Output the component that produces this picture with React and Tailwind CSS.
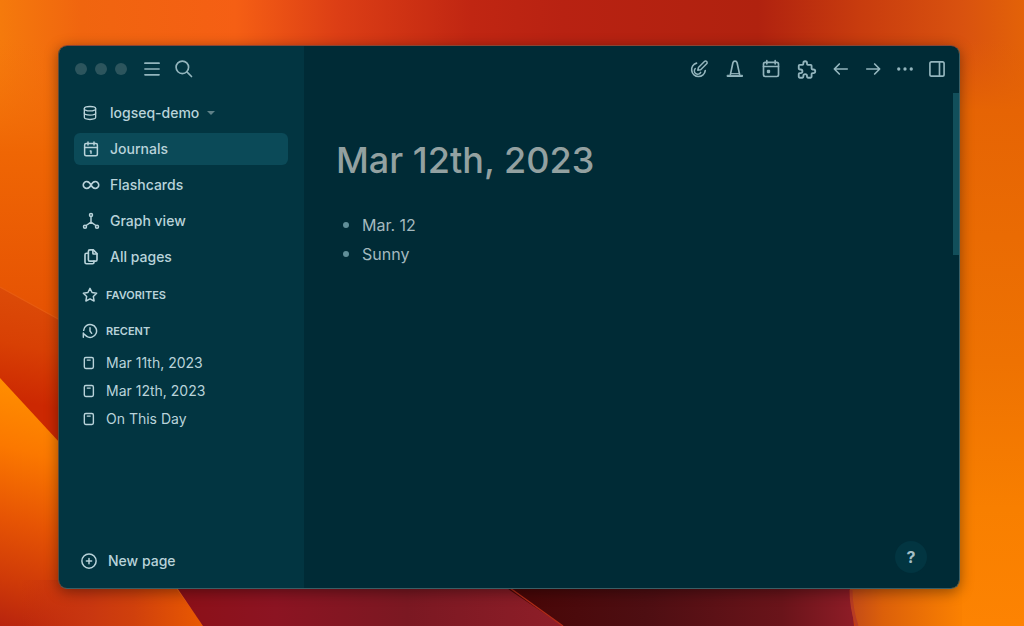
import React from "react";

function Icon({ size = 20, stroke = 2, children, className = "" }) {
  return (
    <svg
      width={size}
      height={size}
      viewBox="0 0 24 24"
      fill="none"
      stroke="currentColor"
      strokeWidth={stroke}
      strokeLinecap="round"
      strokeLinejoin="round"
      className={"shrink-0 " + className}
      aria-hidden="true"
    >
      {children}
    </svg>
  );
}

const DatabaseIcon = () => (
  <Icon size={16}>
    <ellipse cx="12" cy="5.500" rx="8.500" ry="3.200" />
    <path d="M3.500 5.500v6.500a8.500 3.200 0 0 0 17 0V5.500" />
    <path d="M3.500 12v6.500a8.500 3.200 0 0 0 17 0v-6.500" />
  </Icon>
);

const JournalIcon = () => (
  <Icon size={18}>
    <rect x="3.500" y="4.500" width="17" height="16.500" rx="2" />
    <path d="M16 2.500v4M8 2.500v4M3.500 10h17M11 14.500h1v3" />
  </Icon>
);

const InfinityIcon = () => (
  <Icon size={18} stroke={2.2}>
    <path d="M9.600 8.800a4.600 4.600 0 1 0 0 6.400c1 -1 1.700 -2 2.400 -3.200c0.700 -1.200 1.400 -2.200 2.400 -3.200a4.600 4.600 0 1 1 0 6.400c-1 -1 -1.700 -2 -2.400 -3.200c-0.700 -1.200 -1.400 -2.200 -2.400 -3.200" />
  </Icon>
);

const GraphIcon = () => (
  <Icon size={18}>
    <circle cx="12" cy="4" r="2" />
    <circle cx="4" cy="19.500" r="2" />
    <circle cx="20" cy="19.500" r="2" />
    <path d="M5.500 18L12 13.500l6.500 4.500M12 6v7.500" />
  </Icon>
);

const FilesIcon = () => (
  <Icon size={18} stroke={2.2}>
    <path d="M14.500 2.500v4.500a1 1 0 0 0 1 1h4.500" />
    <path d="M18 17.500h-7.500a2 2 0 0 1 -2 -2v-11a2 2 0 0 1 2 -2h4.500l5 5v8a2 2 0 0 1 -2 2z" />
    <path d="M16 17.500v1.500a2 2 0 0 1 -2 2h-8a2 2 0 0 1 -2 -2v-10a2 2 0 0 1 2 -2h2.500" />
  </Icon>
);

const StarIcon = () => (
  <Icon size={16} stroke={2.2}>
    <path d="M12 17.750l-6.172 3.245l1.179 -6.873l-5 -4.867l6.900 -1l3.086 -6.253l3.086 6.253l6.900 1l-5 4.867l1.179 6.873z" />
  </Icon>
);

const HistoryIcon = () => (
  <Icon size={16} stroke={2.2}>
    <path d="M12 7v5l2.500 3.500" />
    <path d="M2.500 11a9.700 9.700 0 1 1 4.500 9.200" />
    <path d="M2 15v6.500M2.200 16l5 4" />
  </Icon>
);

const PageIcon = () => (
  <Icon size={14} stroke={2.4}>
    <rect x="4" y="2.500" width="15.500" height="19" rx="2.500" />
    <path d="M9 7h5" />
  </Icon>
);

const PlusIcon = () => (
  <Icon size={18}>
    <circle cx="12" cy="12" r="9.500" />
    <path d="M8.500 12h7M12 8.500v7" />
  </Icon>
);

const toolbar = [
  {
    label: "Edit",
    wide: true,
    icon: (
      <Icon>
        <path d="M9 5a8.200 8.200 0 1 0 10.500 9" />
        <path d="M7.500 11.500a4 4 0 1 0 6.500 4.500" strokeWidth="1.800" />
        <path d="M10.500 13.500l0.800 -3.200l7.200 -7.200a1.900 1.900 0 0 1 2.700 2.700l-7.200 7.200z" strokeWidth="1.800" />
      </Icon>
    ),
  },
  {
    label: "Cone",
    wide: true,
    icon: (
      <Icon>
        <path d="M6.500 18.500l3 -14a2.600 2.600 0 0 1 5 0l3 14" />
        <path d="M3 19.500h18v1.500h-18z" fill="currentColor" strokeWidth="1.200" />
        <path d="M7 17.500h10" strokeWidth="1.200" />
      </Icon>
    ),
  },
  {
    label: "Calendar",
    wide: true,
    icon: (
      <Icon>
        <rect x="3" y="4" width="18" height="17" rx="2" />
        <path d="M17 2v4M7 2v4M3 9h18" />
        <path d="M8 14h2v2h-2z" fill="currentColor" />
      </Icon>
    ),
  },
  {
    label: "Plugins",
    wide: true,
    icon: (
      <Icon>
        <path
          transform="translate(-1.200 -0.600) scale(1.100)"
          d="M4 7h3a1 1 0 0 0 1 -1v-1a2 2 0 0 1 4 0v1a1 1 0 0 0 1 1h3a1 1 0 0 1 1 1v3a1 1 0 0 0 1 1h1a2 2 0 0 1 0 4h-1a1 1 0 0 0 -1 1v3a1 1 0 0 1 -1 1h-3a1 1 0 0 1 -1 -1v-1a2 2 0 0 0 -4 0v1a1 1 0 0 1 -1 1h-3a1 1 0 0 1 -1 -1v-3a1 1 0 0 1 1 -1h1a2 2 0 0 0 0 -4h-1a1 1 0 0 1 -1 -1v-3a1 1 0 0 1 1 -1"
        />
      </Icon>
    ),
  },
  {
    label: "Back",
    icon: (
      <Icon>
        <path d="M4 12h15.500M4 12l6 6M4 12l6 -6" />
      </Icon>
    ),
  },
  {
    label: "Forward",
    icon: (
      <Icon>
        <path d="M4.500 12h15.500M14 18l6 -6M14 6l6 6" />
      </Icon>
    ),
  },
  {
    label: "More",
    icon: (
      <Icon>
        <circle cx="4.500" cy="12" r="1" fill="currentColor" />
        <circle cx="12" cy="12" r="1" fill="currentColor" />
        <circle cx="19.500" cy="12" r="1" fill="currentColor" />
      </Icon>
    ),
  },
  {
    label: "Toggle right sidebar",
    icon: (
      <Icon>
        <rect x="3.500" y="3.500" width="17" height="17" rx="2" />
        <path d="M15 3.500v17" />
      </Icon>
    ),
  },
];

const nav = [
  { label: "Journals", icon: <JournalIcon />, active: true },
  { label: "Flashcards", icon: <InfinityIcon /> },
  { label: "Graph view", icon: <GraphIcon /> },
  { label: "All pages", icon: <FilesIcon /> },
];

const recent = ["Mar 11th, 2023", "Mar 12th, 2023", "On This Day"];
const blocks = ["Mar. 12", "Sunny"];

function Wallpaper() {
  return (
    <svg
      className="absolute inset-0 h-full w-full"
      viewBox="0 0 1024 626"
      preserveAspectRatio="none"
      aria-hidden="true"
    >
      <defs>
        <linearGradient id="sky" x1="0" y1="0" x2="1024" y2="0" gradientUnits="userSpaceOnUse">
          <stop offset="0" stopColor="#f57a0c" />
          <stop offset="0.080" stopColor="#f0650f" />
          <stop offset="0.230" stopColor="#f55f14" />
          <stop offset="0.330" stopColor="#dc3e15" />
          <stop offset="0.460" stopColor="#c02612" />
          <stop offset="0.550" stopColor="#b82212" />
          <stop offset="0.740" stopColor="#b0220f" />
          <stop offset="0.840" stopColor="#c83c0e" />
          <stop offset="0.940" stopColor="#d9520f" />
          <stop offset="1" stopColor="#e36208" />
        </linearGradient>
        <linearGradient id="right" x1="0" y1="40" x2="0" y2="626" gradientUnits="userSpaceOnUse">
          <stop offset="0" stopColor="#e26006" stopOpacity="0" />
          <stop offset="0.120" stopColor="#e66404" />
          <stop offset="0.550" stopColor="#ee7202" />
          <stop offset="0.800" stopColor="#f87f00" />
          <stop offset="1" stopColor="#fd8302" />
        </linearGradient>
        <linearGradient id="left" x1="0" y1="40" x2="0" y2="320" gradientUnits="userSpaceOnUse">
          <stop offset="0" stopColor="#f2700a" stopOpacity="0" />
          <stop offset="0.400" stopColor="#ef6604" />
          <stop offset="1" stopColor="#e65203" />
        </linearGradient>
        <linearGradient id="facet" x1="30" y1="290" x2="10" y2="400" gradientUnits="userSpaceOnUse">
          <stop offset="0" stopColor="#dc4c08" />
          <stop offset="0.500" stopColor="#d84004" />
          <stop offset="1" stopColor="#cc2802" />
        </linearGradient>
        <linearGradient id="dune" x1="60" y1="400" x2="0" y2="626" gradientUnits="userSpaceOnUse">
          <stop offset="0" stopColor="#ff8c00" />
          <stop offset="0.250" stopColor="#fb7800" />
          <stop offset="0.550" stopColor="#e65404" />
          <stop offset="0.800" stopColor="#cf3a08" />
          <stop offset="1" stopColor="#b8240e" />
        </linearGradient>
        <linearGradient id="foot" x1="20" y1="0" x2="210" y2="0" gradientUnits="userSpaceOnUse">
          <stop offset="0" stopColor="#c22e10" stopOpacity="0" />
          <stop offset="0.350" stopColor="#c83610" />
          <stop offset="0.600" stopColor="#d0400c" />
          <stop offset="1" stopColor="#ec5c00" />
        </linearGradient>
        <linearGradient id="wine" x1="180" y1="0" x2="560" y2="0" gradientUnits="userSpaceOnUse">
          <stop offset="0" stopColor="#8c1018" />
          <stop offset="0.250" stopColor="#8c1422" />
          <stop offset="0.600" stopColor="#7b1822" />
          <stop offset="1" stopColor="#8e1e28" />
        </linearGradient>
        <linearGradient id="night" x1="510" y1="0" x2="850" y2="0" gradientUnits="userSpaceOnUse">
          <stop offset="0" stopColor="#480606" />
          <stop offset="0.400" stopColor="#4e0e12" />
          <stop offset="0.800" stopColor="#6a141a" />
          <stop offset="1" stopColor="#8c1c26" />
        </linearGradient>
        <linearGradient id="ember" x1="850" y1="0" x2="960" y2="0" gradientUnits="userSpaceOnUse">
          <stop offset="0" stopColor="#c24a18" />
          <stop offset="0.300" stopColor="#dc600a" />
          <stop offset="1" stopColor="#fa8001" />
        </linearGradient>
      </defs>
      <rect width="1024" height="626" fill="url(#sky)" />
      <rect x="940" y="40" width="84" height="586" fill="url(#right)" />
      <rect y="40" width="80" height="400" fill="url(#left)" />
      <path d="M0 287L60 320V450L0 380z" fill="url(#facet)" />
      <path d="M0 287L60 320" stroke="#e85c10" strokeWidth="1.200" />
      <path d="M0 378L60 443L204 626H0z" fill="url(#dune)" />
      <path d="M20 580H170L204 626H20z" fill="url(#foot)" />
      <path d="M165 570H500L566 626H203z" fill="url(#wine)" />
      <path d="M480 570H848L854 626H563z" fill="url(#night)" />
      <path d="M510 588L563 626" stroke="#b02a18" strokeWidth="1.500" />
      <path d="M850 570H962V626H856Q848 600 850 570z" fill="url(#ember)" />
      <path d="M851 590Q851 608 857 626" stroke="#b83c22" strokeWidth="3" fill="none" />
    </svg>
  );
}

function Sidebar() {
  return (
    <aside className="flex w-[245px] shrink-0 flex-col bg-[#023541] text-[#b9d3da]">
      <div className="flex h-[46px] items-center pl-4">
        <div className="flex gap-2">
          <span className="h-3 w-3 rounded-full bg-[#2c555d]" />
          <span className="h-3 w-3 rounded-full bg-[#2c555d]" />
          <span className="h-3 w-3 rounded-full bg-[#2c555d]" />
        </div>
        <div className="ml-[9px] flex text-[#93b5bd]">
          <button type="button" aria-label="Toggle left sidebar" className="flex h-8 w-8 items-center justify-center">
            <Icon>
              <path d="M3.500 5h17M3.500 12h17M3.500 19h17" />
            </Icon>
          </button>
          <button type="button" aria-label="Search" className="flex h-8 w-8 items-center justify-center">
            <Icon>
              <circle cx="10" cy="10" r="7.500" />
              <path d="M21 21l-5.500 -5.500" />
            </Icon>
          </button>
        </div>
      </div>

      <div className="flex flex-col gap-1 pt-[5px] pr-4 pl-[15px] text-sm font-medium">
        <button type="button" className="flex h-8 items-center gap-3 px-2">
          <DatabaseIcon />
          <span>logseq-demo</span>
          <svg width="8" height="4" viewBox="0 0 8 4" className="-ml-1 text-[#5f8188]" aria-hidden="true">
            <path d="M0 0h8l-4 4z" fill="currentColor" />
          </svg>
        </button>
        <nav className="flex flex-col gap-1">
          {nav.map((item) => (
            <a
              key={item.label}
              href={"#" + item.label.toLowerCase().replace(" ", "-")}
              className={
                item.active
                  ? "flex h-8 items-center gap-[10px] rounded-md bg-[#0b4a58] px-2"
                  : "flex h-8 items-center gap-[10px] rounded-md px-2"
              }
            >
              {item.icon}
              <span>{item.label}</span>
            </a>
          ))}
        </nav>
      </div>

      <div className="flex flex-col px-[23px] pt-1 text-[11px] font-semibold">
        <h2 className="flex h-9 items-center gap-2">
          <StarIcon />
          FAVORITES
        </h2>
        <h2 className="flex h-9 items-center gap-2">
          <HistoryIcon />
          RECENT
        </h2>
      </div>
      <ul className="px-[23px] text-sm">
        {recent.map((page) => (
          <li key={page}>
            <a href="#page" className="flex h-7 items-center gap-[10px]">
              <PageIcon />
              <span>{page}</span>
            </a>
          </li>
        ))}
      </ul>

      <div className="mt-auto px-[21px] pb-[11px]">
        <button type="button" className="flex h-8 items-center gap-[10px] text-sm font-medium">
          <PlusIcon />
          <span>New page</span>
        </button>
      </div>
    </aside>
  );
}

function Main() {
  return (
    <main className="relative flex min-w-0 flex-1 flex-col bg-[#002b36]">
      <header className="flex h-[46px] items-center justify-end pr-[6px] text-[#93b5bd]">
        {toolbar.map((tool) => (
          <button
            key={tool.label}
            type="button"
            aria-label={tool.label}
            className={
              tool.wide
                ? "flex h-8 w-9 items-center justify-center"
                : "flex h-8 w-8 items-center justify-center"
            }
          >
            {tool.icon}
          </button>
        ))}
      </header>
      <div className="flex flex-1 items-start">
        <article className="flex-1 pt-[42px] pl-8">
          <h1 className="text-4xl leading-[52px] font-medium text-[#93a1a1]">Mar 12th, 2023</h1>
          <ul className="mt-6 text-base text-[#a4b9bf]">
            {blocks.map((text) => (
              <li key={text} className="flex h-[29px] items-center gap-[13px] pl-[7px]">
                <span className="h-[6px] w-[6px] rounded-full bg-[#608e98]" />
                <span>{text}</span>
              </li>
            ))}
          </ul>
        </article>
        <div className="mt-px h-[162px] w-[6px] bg-[#124f5b]" />
      </div>
      <button
        type="button"
        aria-label="Help"
        className="absolute right-8 bottom-[15px] h-8 w-8 rounded-full bg-[#023541] text-base font-bold text-[#a4bfc6]"
      >
        ?
      </button>
    </main>
  );
}

export default function App() {
  return (
    <div className="relative h-screen min-h-[540px] overflow-hidden font-['Inter',sans-serif]">
      <Wallpaper />
      <div className="relative flex h-full pt-[45px] pr-[64px] pb-[37px] pl-[58px]">
        <div className="flex flex-1 overflow-hidden rounded-[9px] border border-[#3a5f66] border-t-[#8a4434] border-l-[#5a4a3c] shadow-[0_3px_14px_rgba(0,0,0,0.4)]">
          <Sidebar />
          <Main />
        </div>
      </div>
    </div>
  );
}
